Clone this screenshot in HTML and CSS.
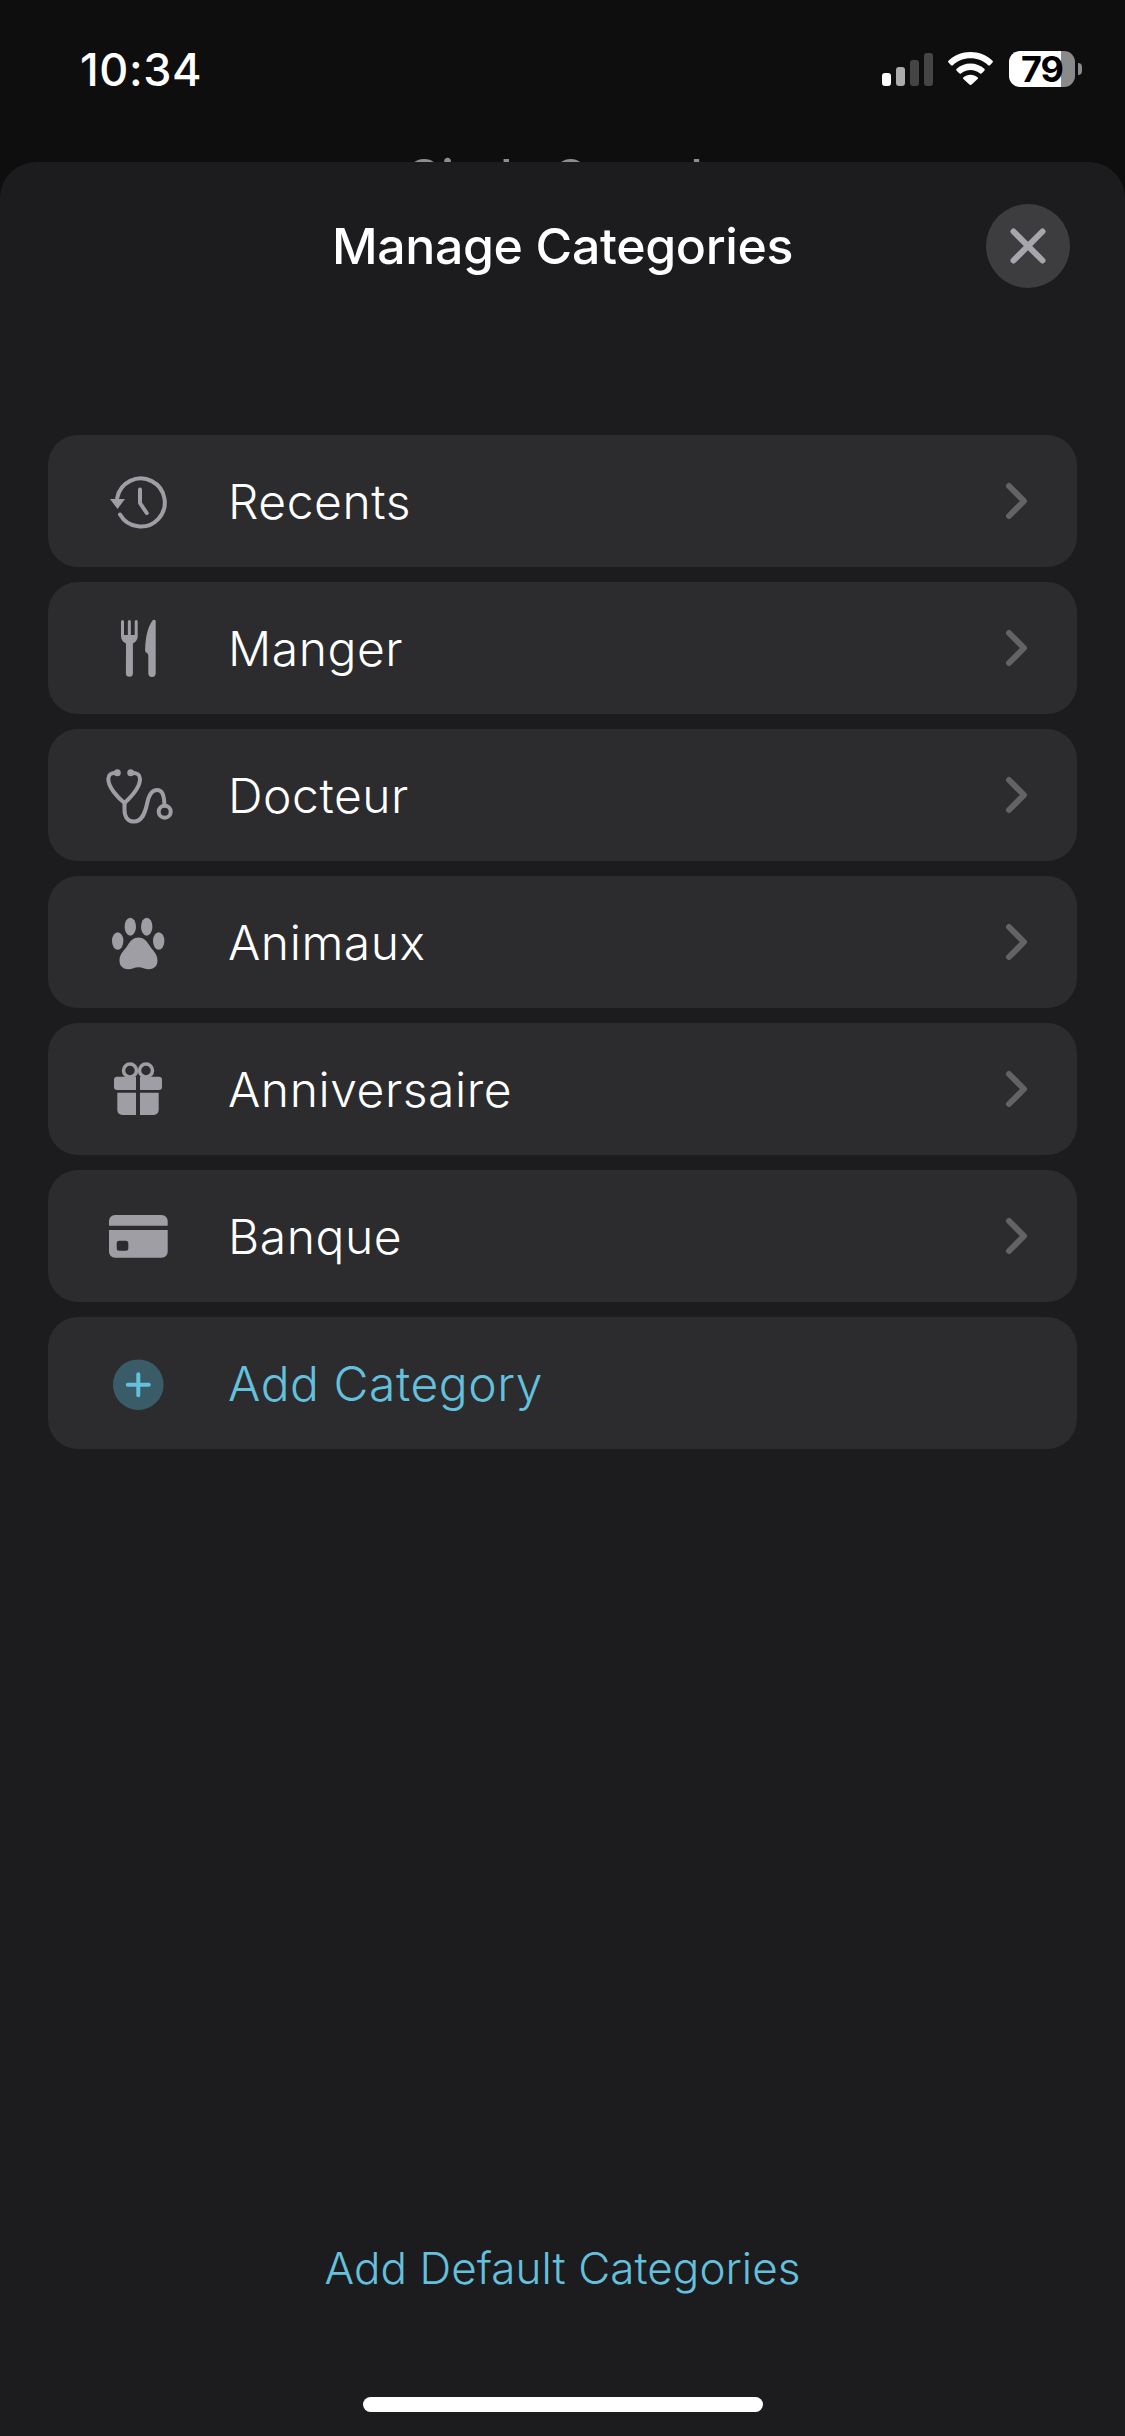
FILE: index.html
```html
<!DOCTYPE html>
<html lang="en">
<head>
    <meta charset="UTF-8">
    <meta name="viewport" content="width=device-width, initial-scale=1.0">
    <title>Manage Categories</title>
    <link rel="stylesheet" href="styles.css">
</head>
<body>
    <div class="backdrop">
        <div class="status-bar">
            <span class="status-time">10:34</span>
            <div class="status-icons">
                <svg class="status-signal" width="51" height="33" viewBox="0 0 51 33">
                    <rect x="0" y="20" width="9" height="13" rx="3" fill="#fff"/>
                    <rect x="14" y="14" width="9" height="19" rx="3" fill="#ababab"/>
                    <rect x="28" y="7" width="9" height="26" rx="3" fill="#454545"/>
                    <rect x="42" y="0" width="9" height="33" rx="3" fill="#454545"/>
                </svg>
                <svg class="status-wifi" width="45" height="33" viewBox="0 0 45 33">
                    <path d="M22.5 0C14 0 6.300 3.300.500 8.700c-.6.500-.6 1.300 0 1.900l2.500 2.600c.5.500 1.300.5 1.900 0C9.600 8.900 15.700 6.300 22.500 6.300s12.900 2.600 17.600 6.900c.6.500 1.400.5 1.900 0l2.500-2.600c.6-.6.600-1.400 0-1.900C38.700 3.300 31 0 22.500 0z" fill="#fff"/>
                    <path d="M22.500 11.500c-5.300 0-10.100 2-13.800 5.300-.6.500-.6 1.300 0 1.900l2.500 2.600c.5.500 1.300.5 1.800.1 2.600-2.200 5.900-3.500 9.500-3.500s6.900 1.300 9.500 3.500c.5.400 1.300.4 1.800-.1l2.500-2.600c.6-.6.600-1.400 0-1.900-3.700-3.300-8.500-5.300-13.800-5.300z" fill="#fff"/>
                    <path d="M22.500 22.800c-2.700 0-5.100.9-7 2.500-.6.500-.6 1.300-.1 1.800l6 5.400c.6.600 1.600.6 2.200 0l6-5.400c.5-.5.500-1.300-.1-1.800-1.900-1.600-4.300-2.500-7-2.500z" fill="#fff"/>
                </svg>
                <div class="status-battery">79</div>
            </div>
        </div>
        <div class="backdrop-title">Circle Search</div>
    </div>

    <main class="sheet">
        <header class="sheet-header">
            <h1 class="sheet-title">Manage Categories</h1>
            <button class="close-button" aria-label="Close">
                <svg width="36" height="36" viewBox="0 0 36 36">
                    <path d="M3.500 3.500l29 29M32.500 3.500l-29 29" class="icon-line close-x"/>
                </svg>
            </button>
        </header>

        <ul class="category-list">
            <li class="category-row">
                <svg class="category-icon" width="90" height="90" viewBox="0 0 90 90">
                    <path d="M24.200 42A24 24 0 1 1 27 58.500" class="icon-line"/>
                    <path d="M47 33.500V47l6.700 10" class="icon-line"/>
                    <path d="M17 43h15l-7.500 10z" class="icon-fill"/>
                </svg>
                <span class="category-name">Recents</span>
                <svg class="category-chevron" width="24" height="42" viewBox="0 0 24 42">
                    <path d="M4 6l15 15L4 36" class="icon-line"/>
                </svg>
            </li>
            <li class="category-row">
                <svg class="category-icon" width="90" height="90" viewBox="0 0 90 90">
                    <path d="M28 18.500a1.500 1.500 0 0 1 3 0V32h3.850V18.500a1.500 1.500 0 0 1 3 0V32h3.850V18.500a1.500 1.500 0 0 1 3 0V33c0 4-2.400 6.300-4.800 7.400L39.900 70.300a3.500 3.500 0 0 1-7 0l.1-29.900C30.600 39.300 28 37 28 33z" class="icon-fill"/>
                    <path d="M62.700 18.500V70.300a3.700 3.700 0 0 1-7.400 0V53c0-1.500-.7-2.500-1.800-3.200-1-.7-1.500-1.600-1.400-2.800C52.500 35 54.500 24 59.500 17.500c1.200-1.500 3.200-1 3.200 1z" class="icon-fill"/>
                </svg>
                <span class="category-name">Manger</span>
                <svg class="category-chevron" width="24" height="42" viewBox="0 0 24 42">
                    <path d="M4 6l15 15L4 36" class="icon-line"/>
                </svg>
            </li>
            <li class="category-row">
                <svg class="category-icon" width="90" height="90" viewBox="0 0 90 90">
                    <path d="M24.300 22.700C19 22.700 15.300 23.500 15.300 29 15.300 37 24 47 31.500 53 38 47 47 38 47 29 47 23.500 43 22.700 37.700 22.700" class="icon-line"/>
                    <path d="M31.500 53V60C31.500 67 35 71.500 41 71.500 49 71.500 52 63 54 54 55.500 46 58 40 64 40 69 40 71 44 71.500 55.500" class="icon-line"/>
                    <circle cx="71.700" cy="61.700" r="6" class="icon-line"/>
                    <circle cx="24.300" cy="22.700" r="3.500" class="icon-fill"/>
                    <circle cx="37.700" cy="22.700" r="3.500" class="icon-fill"/>
                </svg>
                <span class="category-name">Docteur</span>
                <svg class="category-chevron" width="24" height="42" viewBox="0 0 24 42">
                    <path d="M4 6l15 15L4 36" class="icon-line"/>
                </svg>
            </li>
            <li class="category-row">
                <svg class="category-icon" width="90" height="90" viewBox="0 0 90 90">
                    <ellipse cx="37.300" cy="29.700" rx="5.700" ry="9" class="icon-fill"/>
                    <ellipse cx="53.700" cy="29.700" rx="5.700" ry="9" class="icon-fill"/>
                    <ellipse cx="24.700" cy="44" rx="5.700" ry="8.700" class="icon-fill"/>
                    <ellipse cx="65.700" cy="44" rx="5.700" ry="8.700" class="icon-fill"/>
                    <path d="M45.500 40.500c5 0 8 3 11 8 3 5 8 8 8 15 0 6-4 8.700-8.700 8.700-4 0-6.500-2-10.300-2s-6.300 2-10.300 2c-4.700 0-8.700-2.700-8.700-8.700 0-7 5-10 8-15 3-5 6-8 11-8z" class="icon-fill"/>
                </svg>
                <span class="category-name">Animaux</span>
                <svg class="category-chevron" width="24" height="42" viewBox="0 0 24 42">
                    <path d="M4 6l15 15L4 36" class="icon-line"/>
                </svg>
            </li>
            <li class="category-row">
                <svg class="category-icon" width="90" height="90" viewBox="0 0 90 90">
                    <circle cx="37" cy="26.500" r="6.500" class="icon-line gift-bow"/>
                    <circle cx="53" cy="26.500" r="6.500" class="icon-line gift-bow"/>
                    <path d="M24 32.700H43V46H24a3 3 0 0 1-3-3V35.700a3 3 0 0 1 3-3z" class="icon-fill"/>
                    <path d="M47 32.700H66a3 3 0 0 1 3 3V43a3 3 0 0 1-3 3H47z" class="icon-fill"/>
                    <path d="M24.300 48.700H43V71H29.300a5 5 0 0 1-5-5z" class="icon-fill"/>
                    <path d="M47 48.700H65.700V66a5 5 0 0 1-5 5H47z" class="icon-fill"/>
                </svg>
                <span class="category-name">Anniversaire</span>
                <svg class="category-chevron" width="24" height="42" viewBox="0 0 24 42">
                    <path d="M4 6l15 15L4 36" class="icon-line"/>
                </svg>
            </li>
            <li class="category-row">
                <svg class="category-icon" width="90" height="90" viewBox="0 0 90 90">
                    <path d="M22 24H68.700a6 6 0 0 1 6 6V34.700H16V30a6 6 0 0 1 6-6z" class="icon-fill"/>
                    <path d="M16 39H74.700V60.700a6 6 0 0 1-6 6H22a6 6 0 0 1-6-6z" class="icon-fill"/>
                    <rect x="23.700" y="49.700" width="11.600" height="10" rx="2.500" class="card-chip"/>
                </svg>
                <span class="category-name">Banque</span>
                <svg class="category-chevron" width="24" height="42" viewBox="0 0 24 42">
                    <path d="M4 6l15 15L4 36" class="icon-line"/>
                </svg>
            </li>
            <li class="category-row">
                <svg class="category-icon" width="90" height="90" viewBox="0 0 90 90">
                    <circle cx="45.300" cy="46.700" r="25.300" class="add-circle"/>
                    <path d="M34.800 46.700h21M45.300 36.200v21" class="icon-line add-plus"/>
                </svg>
                <span class="category-name">Add Category</span>
            </li>
        </ul>

        <button class="defaults-button">Add Default Categories</button>
        <div class="home-indicator"></div>
    </main>
</body>
</html>
```

FILE: styles.css
```css
:root {
    --backdrop: #0e0e0f;
    --sheet: #1c1c1e;
    --row: #2c2c2e;
    --icon: #9e9ea4;
    --chevron: #636366;
    --accent: #64c0dd;
}

* {
    margin: 0;
    padding: 0;
    box-sizing: border-box;
}

body {
    font-family: Inter, 'Liberation Sans', sans-serif;
    background: var(--backdrop);
    color: #fff;
    width: 1125px;
    height: 2436px;
    display: flex;
    flex-direction: column;
    overflow: hidden;
}

.backdrop {
    height: 162px;
    overflow: hidden;
    flex-shrink: 0;
}

.status-bar {
    height: 136px;
    padding: 43px 50px 0 80px;
    display: flex;
    justify-content: space-between;
    align-items: flex-start;
}

.status-time {
    font-size: 45px;
    font-weight: 550;
    letter-spacing: 0.6px;
    line-height: 54px;
}

.status-icons {
    display: flex;
    align-items: flex-start;
    margin-top: 8px;
}

.status-signal {
    margin-top: 2px;
    margin-right: 15px;
}

.status-wifi {
    margin-top: 1px;
    margin-right: 16px;
}

.status-battery {
    position: relative;
    width: 66px;
    height: 36px;
    border-radius: 11px;
    background: linear-gradient(to right, #fff 52px, #8a8a8a 52px);
    color: #000;
    font-size: 36px;
    font-weight: 700;
    line-height: 36px;
    padding-left: 12px;
    letter-spacing: -1px;
}

.status-battery::after {
    content: '';
    position: absolute;
    right: -7px;
    top: 12px;
    width: 4px;
    height: 12px;
    border-radius: 0 6px 6px 0;
    background: #8a8a8a;
}

.backdrop-title {
    text-align: center;
    color: #8d8d8d;
    font-size: 50px;
    font-weight: 550;
    letter-spacing: -0.35px;
    line-height: 62px;
    margin-top: 10px;
}

.sheet {
    flex: 1;
    background: var(--sheet);
    border-radius: 36px 36px 0 0;
    padding: 0 48px;
    display: flex;
    flex-direction: column;
}

.sheet-header {
    display: grid;
    grid-template-columns: 1fr auto 1fr;
    align-items: center;
    padding-top: 42px;
}

.sheet-title {
    grid-column: 2;
    font-size: 50px;
    font-weight: 550;
    letter-spacing: -0.35px;
    white-space: nowrap;
}

.close-button {
    grid-column: 3;
    justify-self: end;
    width: 84px;
    height: 84px;
    margin-right: 7px;
    border: none;
    border-radius: 50%;
    background: #3d3d40;
    display: flex;
    align-items: center;
    justify-content: center;
}

.category-list {
    list-style: none;
    margin-top: 147px;
    display: flex;
    flex-direction: column;
    gap: 15px;
}

.category-row {
    height: 132px;
    background: var(--row);
    border-radius: 30px;
    padding: 0 48px 0 45px;
    display: flex;
    align-items: center;
    gap: 45px;
}

.category-name {
    flex: 1;
    font-size: 48px;
    font-weight: 360;
    letter-spacing: 0.55px;
    color: #fff;
}

.category-row:last-child .category-name {
    color: var(--accent);
}

.icon-fill {
    fill: var(--icon);
}

.icon-line {
    fill: none;
    stroke: var(--icon);
    stroke-width: 4;
    stroke-linecap: round;
    stroke-linejoin: round;
}

.category-chevron .icon-line {
    stroke: var(--chevron);
    stroke-width: 6;
}

.close-x {
    stroke: #a6a6ac;
    stroke-width: 6;
}

.gift-bow {
    stroke-width: 3.5;
}

.card-chip {
    fill: var(--row);
}

.add-circle {
    fill: #3a5b68;
}

.add-plus {
    stroke: var(--accent);
    stroke-width: 4;
}

.defaults-button {
    margin-top: auto;
    align-self: center;
    background: none;
    border: none;
    color: var(--accent);
    font-family: inherit;
    font-size: 44px;
    font-weight: 360;
    letter-spacing: 0.05px;
    line-height: 54px;
}

.home-indicator {
    align-self: center;
    width: 400px;
    height: 15px;
    margin-top: 102px;
    margin-bottom: 24px;
    border-radius: 8px;
    background: #fff;
}
```
